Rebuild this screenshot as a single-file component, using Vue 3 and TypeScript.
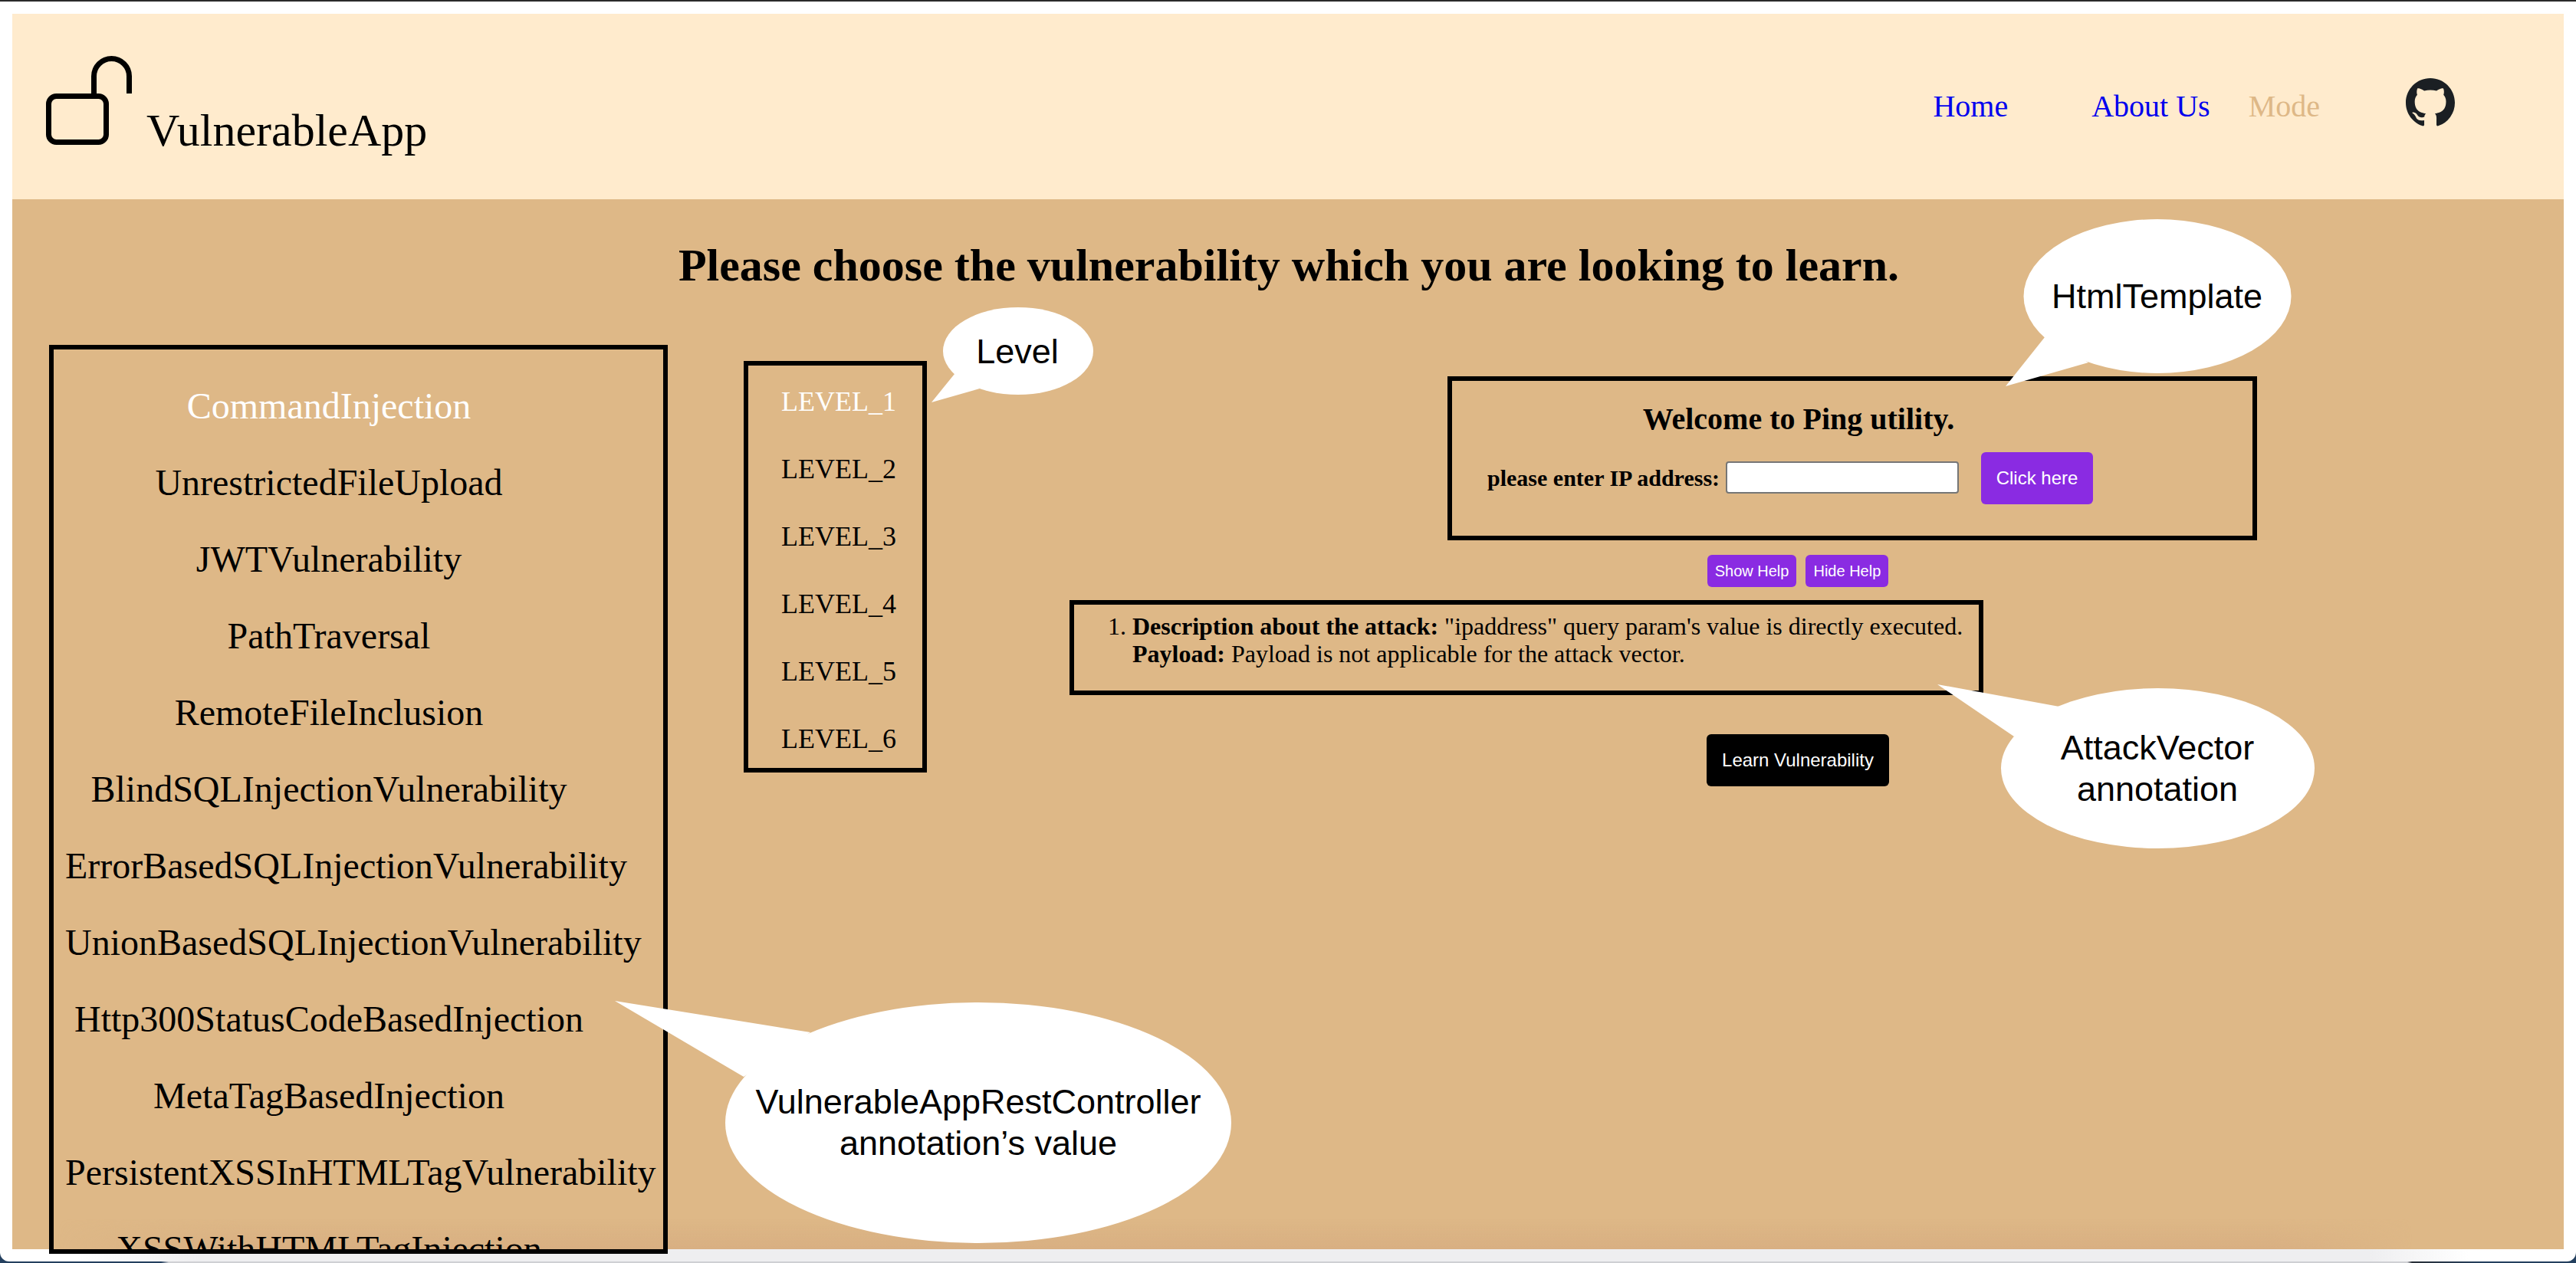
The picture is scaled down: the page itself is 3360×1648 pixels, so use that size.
<script setup lang="ts">
interface Bubble {
  cx: number
  cy: number
  rx: number
  ry: number
  tail: string
  textX: number
  textY: number
  lines: string[]
}

const vulnerabilities: string[] = [
  'CommandInjection',
  'UnrestrictedFileUpload',
  'JWTVulnerability',
  'PathTraversal',
  'RemoteFileInclusion',
  'BlindSQLInjectionVulnerability',
  'ErrorBasedSQLInjectionVulnerability',
  'UnionBasedSQLInjectionVulnerability',
  'Http300StatusCodeBasedInjection',
  'MetaTagBasedInjection',
  'PersistentXSSInHTMLTagVulnerability',
  'XSSWithHTMLTagInjection',
]

const levels: string[] = ['LEVEL_1', 'LEVEL_2', 'LEVEL_3', 'LEVEL_4', 'LEVEL_5', 'LEVEL_6']

const bubbles: Bubble[] = [
  {
    cx: 2814, cy: 386.5, rx: 174.5, ry: 100.5,
    tail: '2667,440 2616,504 2724,473',
    textX: 2813.5, textY: 360, lines: ['HtmlTemplate'],
  },
  {
    cx: 1328, cy: 458, rx: 98, ry: 57,
    tail: '1245,488 1215,525 1278,507',
    textX: 1327, textY: 432, lines: ['Level'],
  },
  {
    cx: 2814.5, cy: 1002.5, rx: 204.5, ry: 104.5,
    tail: '2686,922 2527,893 2627,961',
    textX: 2814, textY: 949, lines: ['AttackVector', 'annotation'],
  },
  {
    cx: 1276, cy: 1465, rx: 330, ry: 157,
    tail: '1057,1347 802,1306 970,1405',
    textX: 1276, textY: 1411, lines: ['VulnerableAppRestController', 'annotation’s value'],
  },
]
</script>

<template>
  <div class="screen">
    <div class="topbar"></div>
    <div class="window">
      <header class="header">
        <div class="brand">
          <svg class="lock" viewBox="0 0 112 117" aria-hidden="true">
            <rect x="3.5" y="52.5" width="75" height="60" rx="10" fill="none" stroke="#000" stroke-width="7" />
            <path d="M62.5 50V26.5a23 23 0 0 1 46 0V49" fill="none" stroke="#000" stroke-width="7" />
          </svg>
          <div class="title">VulnerableApp</div>
        </div>
        <nav class="nav">
          <a class="link home">Home</a>
          <a class="link about">About Us</a>
          <a class="link mode">Mode</a>
          <svg class="github" viewBox="0 0 16 16" aria-hidden="true">
            <path fill="#1b1f23" d="M8 0C3.58 0 0 3.58 0 8c0 3.54 2.29 6.53 5.47 7.59.4.07.55-.17.55-.38 0-.19-.01-.82-.01-1.49-2.01.37-2.53-.49-2.69-.94-.09-.23-.48-.94-.82-1.13-.28-.15-.68-.52-.01-.53.63-.01 1.08.58 1.23.82.72 1.21 1.87.87 2.33.66.07-.52.28-.87.51-1.07-1.78-.2-3.64-.89-3.64-3.95 0-.87.31-1.59.82-2.15-.08-.2-.36-1.02.08-2.12 0 0 .67-.21 2.2.82.64-.18 1.32-.27 2-.27.68 0 1.36.09 2 .27 1.53-1.04 2.2-.82 2.2-.82.44 1.1.16 1.92.08 2.12.51.56.82 1.27.82 2.15 0 3.07-1.87 3.75-3.65 3.95.29.25.54.73.54 1.48 0 1.07-.01 1.93-.01 2.2 0 .21.15.46.55.38A8.013 8.013 0 0016 8c0-4.42-3.58-8-8-8z" />
          </svg>
        </nav>
      </header>

      <main class="main">
        <h1 class="heading">Please choose the vulnerability which you are looking to learn.</h1>
        <div class="row">
          <ul class="vuln-list">
            <li v-for="(name, i) in vulnerabilities" :key="name" class="vuln" :class="{ active: i === 0 }">{{ name }}</li>
          </ul>
          <ul class="level-list">
            <li v-for="(level, i) in levels" :key="level" class="level" :class="{ active: i === 0 }">{{ level }}</li>
          </ul>
          <section class="content">
            <div class="template-box">
              <h3 class="welcome">Welcome to Ping utility.</h3>
              <div class="ping-form">
                <label class="ip-label" for="ip">please enter IP address:</label>
                <input id="ip" class="ip-input" type="text" />
                <button class="btn click-here">Click here</button>
              </div>
            </div>
            <div class="help-buttons">
              <button class="btn help">Show Help</button>
              <button class="btn help">Hide Help</button>
            </div>
            <div class="attack-box">
              <ol class="attack-list">
                <li>
                  <b>Description about the attack:</b> "ipaddress" query param's value is directly executed.<br />
                  <b>Payload:</b> Payload is not applicable for the attack vector.
                </li>
              </ol>
            </div>
            <button class="btn learn">Learn Vulnerability</button>
          </section>
        </div>
      </main>
    </div>

    <svg class="callouts" viewBox="0 0 3360 1648" aria-hidden="true">
      <g v-for="b in bubbles" :key="b.tail" fill="#fff">
        <ellipse :cx="b.cx" :cy="b.cy" :rx="b.rx" :ry="b.ry" />
        <polygon :points="b.tail" />
      </g>
    </svg>
    <div
      v-for="b in bubbles"
      :key="b.lines[0]"
      class="callout-text"
      :style="{ left: b.textX + 'px', top: b.textY + 'px' }"
    >
      <div v-for="line in b.lines" :key="line">{{ line }}</div>
    </div>
  </div>
</template>

<style scoped>
.screen {
  position: relative;
  width: 3360px;
  height: 1648px;
  overflow: hidden;
  background: linear-gradient(90deg, #24405f 0, #24405f 210px, #cfd0d4 220px, #cfd0d4 3140px, #2a3038 3146px, #24405f 3240px);
  font-family: "Liberation Serif", serif;
  color: #000;
}
.topbar {
  height: 2px;
  background: #2a2a2a;
}
.window {
  display: flex;
  flex-direction: column;
  height: 1644px;
  box-sizing: border-box;
  padding: 16px 16px 0;
  border-radius: 0 0 12px 12px;
  background: #fff linear-gradient(90deg, #fff 100px, #eeeef0 260px, #eeeef0 3090px, #fff 3220px) no-repeat bottom / 100% 16px;
}
.header {
  display: flex;
  justify-content: space-between;
  height: 242px;
  flex-shrink: 0;
  padding: 55px 142px 0 44px;
  box-sizing: border-box;
  background: #ffebcd;
}
.brand {
  display: flex;
  align-items: flex-start;
}
.lock {
  width: 112px;
  height: 117px;
  flex-shrink: 0;
}
.title {
  margin: 64px 0 0 19px;
  font-size: 60px;
  line-height: 66px;
}
.nav {
  display: flex;
  align-items: flex-start;
  margin-top: 29px;
}
.link {
  margin-top: 14px;
  font-size: 40px;
  line-height: 46px;
  color: #00e;
}
.about {
  margin-left: 109px;
}
.mode {
  margin-left: 50px;
  color: #deb887;
}
.github {
  width: 64px;
  height: 64px;
  margin-left: 112px;
}
.main {
  position: relative;
  height: 1370px;
  flex-shrink: 0;
  background: #deb887;
}
.main::after {
  content: "";
  position: absolute;
  left: 0;
  right: 0;
  bottom: 0;
  height: 40px;
  background: linear-gradient(to top, #d8af82, rgba(216, 175, 130, 0));
  -webkit-mask-image: linear-gradient(90deg, transparent 60px, #000 300px, #000 2950px, transparent 3130px);
  mask-image: linear-gradient(90deg, transparent 60px, #000 300px, #000 2950px, transparent 3130px);
}
.heading {
  margin: 0;
  padding: 53px 0 71px 2px;
  font-size: 60px;
  line-height: 66px;
  font-weight: 700;
  text-align: center;
}
.row {
  display: flex;
  align-items: flex-start;
  padding-left: 48px;
}
.vuln-list {
  position: relative;
  z-index: 1;
  flex-shrink: 0;
  display: flex;
  flex-direction: column;
  gap: 45px;
  width: 807px;
  height: 1186px;
  box-sizing: border-box;
  margin: 0;
  padding: 46px 92px 0 15px;
  border: 6px solid #000;
  overflow: hidden;
  list-style: none;
}
.vuln {
  flex-shrink: 0;
  width: 688px;
  font-size: 48px;
  line-height: 55px;
  text-align: center;
  white-space: nowrap;
}
.active {
  color: #fff;
}
.level-list {
  flex-shrink: 0;
  display: flex;
  flex-direction: column;
  gap: 44px;
  width: 239px;
  box-sizing: border-box;
  margin: 21px 0 0 99px;
  padding: 25px 0 16px 43px;
  border: 6px solid #000;
  list-style: none;
}
.level {
  font-size: 36px;
  line-height: 44px;
  white-space: nowrap;
}
.content {
  display: flex;
  flex-direction: column;
  align-items: center;
  flex-shrink: 0;
  width: 1900px;
  margin: 41px 0 0 186px;
}
.template-box {
  align-self: flex-start;
  width: 1056px;
  box-sizing: border-box;
  margin-left: 493px;
  padding: 27px 140px 41px 46px;
  border: 6px solid #000;
}
.welcome {
  margin: 0 0 20px -46px;
  font-size: 40px;
  line-height: 46px;
  font-weight: 700;
  text-align: center;
}
.ping-form {
  display: flex;
  align-items: center;
}
.ip-label {
  font-size: 30px;
  font-weight: 700;
  white-space: nowrap;
}
.ip-input {
  width: 304px;
  height: 42px;
  box-sizing: border-box;
  margin: -2px 0 0 8px;
  padding: 0 4px;
  border: 2px solid #767676;
  border-radius: 4px;
  background: #fff;
}
.btn {
  border: 0;
  border-radius: 6px;
  color: #fff;
  font-family: "Liberation Sans", Arial, sans-serif;
  background: #8a2be2;
  white-space: nowrap;
}
.click-here {
  width: 146px;
  height: 68px;
  margin-left: 29px;
  font-size: 24px;
}
.help-buttons {
  display: flex;
  gap: 12px;
  margin-top: 19px;
}
.help {
  height: 42px;
  padding: 0 10px;
  font-size: 20px;
}
.attack-box {
  align-self: flex-start;
  width: 1192px;
  box-sizing: border-box;
  margin-top: 17px;
  padding: 10px 0 30px;
  border: 6px solid #000;
}
.attack-list {
  margin: 0;
  padding: 0 0 0 76px;
  font-size: 32px;
  line-height: 36px;
}
.learn {
  width: 238px;
  height: 68px;
  margin-top: 51px;
  font-size: 24px;
  background: #000;
}
.callouts {
  position: absolute;
  inset: 0;
  width: 3360px;
  height: 1648px;
  z-index: 2;
  pointer-events: none;
}
.callout-text {
  position: absolute;
  z-index: 3;
  transform: translateX(-50%);
  font-family: "Liberation Sans", Arial, sans-serif;
  font-size: 45px;
  line-height: 54px;
  text-align: center;
  white-space: nowrap;
}
</style>

<style>
html,
body {
  margin: 0;
  padding: 0;
}
</style>
